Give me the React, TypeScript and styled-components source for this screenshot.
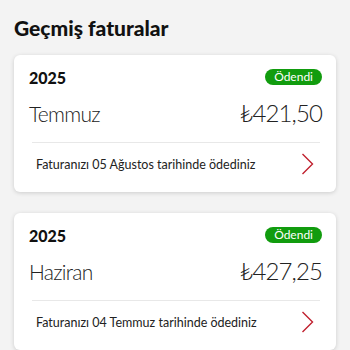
import React from "react";
import styled, { createGlobalStyle } from "styled-components";

const Global = createGlobalStyle`
  html, body { margin: 0; padding: 0; background: #f3f3f3; }
  body { font-family: Lato, "Open Sans", sans-serif; color: #1a1a1a; }
`;

const Page = styled.div`
  width: 350px;
  height: 350px;
  overflow: hidden;
  box-sizing: border-box;
  padding: 14px 14px 0 14px;
  display: flex;
  flex-direction: column;
`;

const Title = styled.h1`
  margin: 0;
  font-family: Lato, sans-serif;
  font-weight: 900;
  font-size: 21px;
  line-height: 28px;
  color: #111;
`;

const List = styled.div`
  margin-top: 13px;
  display: flex;
  flex-direction: column;
  gap: 21px;
`;

const Card = styled.div`
  background: #fff;
  border-radius: 6px;
  box-shadow: 0 1px 4px rgba(0, 0, 0, 0.16);
  padding: 14px 14px 0 15px;
  display: flex;
  flex-direction: column;
`;

const HeaderRow = styled.div`
  display: flex;
  justify-content: space-between;
  align-items: center;
  height: 16px;
`;

const Year = styled.span`
  font-weight: 900;
  font-size: 16px;
  color: #111;
`;

const Badge = styled.span`
  background: #119c0e;
  color: #fff;
  font-size: 12px;
  line-height: 16px;
  height: 16px;
  padding: 0 9px;
  border-radius: 8px;
  font-weight: 400;
`;

const MonthRow = styled.div`
  margin-top: 13px;
  display: flex;
  justify-content: space-between;
  align-items: baseline;
  line-height: 30px;
`;

const Month = styled.span`
  font-weight: 300;
  font-size: 21px;
  letter-spacing: -0.7px;
  color: #222;
`;

const Amount = styled.span`
  font-weight: 300;
  font-size: 24px;
  letter-spacing: -0.9px;
  color: #222;
`;

const Divider = styled.div`
  margin: 13px 2px 0 3px;
  height: 1px;
  background: #e8e8e8;
`;

const LinkRow = styled.div`
  display: flex;
  justify-content: space-between;
  align-items: center;
  padding: 0 8px 0 7px;
  height: 42px;
  margin-bottom: 7px;
`;

const LinkText = styled.span`
  font-size: 12.5px;
  color: #222;
`;

const Chevron = () => (
  <svg width="13" height="22" viewBox="0 0 13 22" fill="none">
    <path d="M1.5 1 L11.5 11 L1.5 21" stroke="#c0202e" strokeWidth="1.4" />
  </svg>
);

const bills = [
  { year: "2025", month: "Temmuz", amount: "₺421,50", date: "05 Ağustos" },
  { year: "2025", month: "Haziran", amount: "₺427,25", date: "04 Temmuz" },
];

export default function App() {
  return (
    <>
      <Global />
      <Page>
        <Title>Geçmiş faturalar</Title>
        <List>
          {bills.map((b) => (
            <Card key={b.month}>
              <HeaderRow>
                <Year>{b.year}</Year>
                <Badge>Ödendi</Badge>
              </HeaderRow>
              <MonthRow>
                <Month>{b.month}</Month>
                <Amount>{b.amount}</Amount>
              </MonthRow>
              <Divider />
              <LinkRow>
                <LinkText>Faturanızı {b.date} tarihinde ödediniz</LinkText>
                <Chevron />
              </LinkRow>
            </Card>
          ))}
        </List>
      </Page>
    </>
  );
}
